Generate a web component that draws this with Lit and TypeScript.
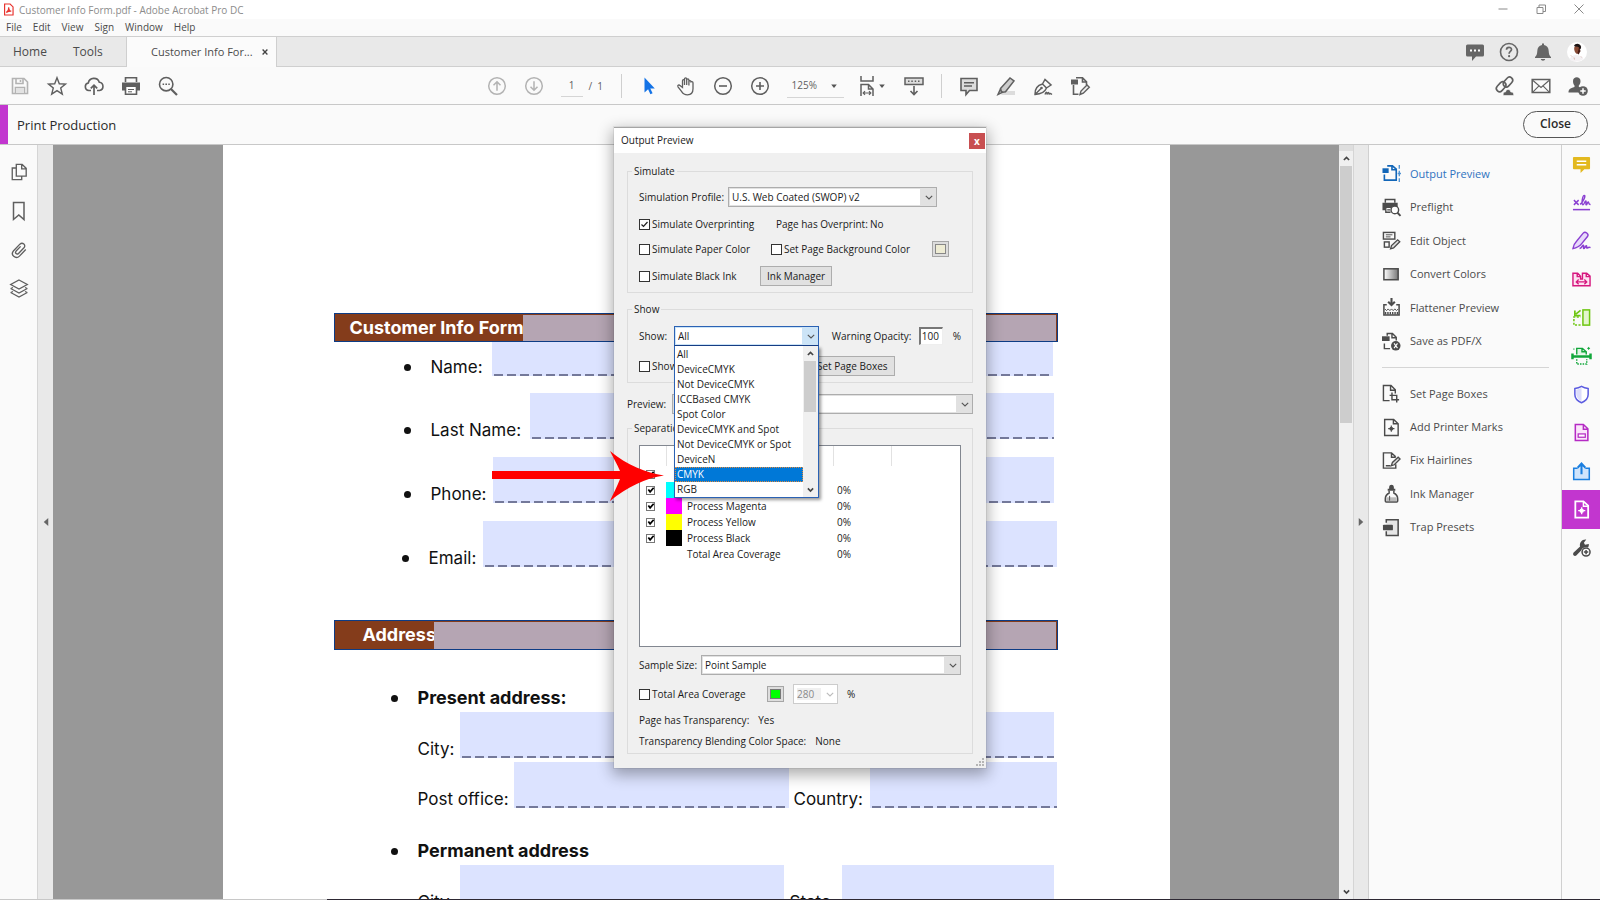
import { LitElement, html, css, svg, nothing } from "lit";
import { customElement, property } from "lit/decorators.js";

const ICONS: Record<string, unknown> = {
  pdf: svg`<path d="M4 1.500h8.500L17 6v12.500H4z" fill="#fff" stroke="#e8322d" stroke-width="1.800"/><path d="M6.500 14.500c2-1 4-4.500 3.800-8 .2 4 2 6 4 6-3-.2-5 .5-7.800 2z" fill="none" stroke="#e8322d" stroke-width="1.700"/>`,
  save: svg`<g fill="none" stroke="#b3b3b3" stroke-width="1.600"><path d="M2.500 2.500h11.500l3.500 3.500v11.500h-15z"/><path d="M6 2.500v5h7v-5M5.500 17.500v-6h9v6M10.500 4v2"/></g><path d="M6 12h8v5H6z" fill="#e2e2e2"/>`,
  star: svg`<path d="M10 1.800l2.300 5.900 6.200.3-4.800 4 1.600 6.200L10 14.700l-5.300 3.500L6.300 12 1.500 8l6.200-.3z" fill="none" stroke="currentColor" stroke-width="1.400"/>`,
  cloud: svg`<path d="M7 14.500H4.800a3.800 3.800 0 0 1-.5-7.500 5.700 5.700 0 0 1 11-.8 4.200 4.200 0 0 1 .2 8.300H13" fill="none" stroke="currentColor" stroke-width="1.600"/><path d="M10 19V9.500M6.800 12.300L10 9.200l3.200 3.100" fill="none" stroke="currentColor" stroke-width="1.700"/>`,
  print: svg`<path d="M4.500 6V1.800h11V6" fill="none" stroke="currentColor" stroke-width="1.600"/><path d="M1 6.500h18v8h-3v-3H4v3H1z" fill="currentColor"/><path d="M4.500 11v7.200h11V11" fill="#fff" stroke="currentColor" stroke-width="1.600"/><path d="M7 13.500h6M7 15.800h4" stroke="currentColor"/>`,
  find: svg`<circle cx="8.200" cy="8.200" r="6.700" fill="none" stroke="currentColor" stroke-width="1.600"/><path d="M13 13l6 6" stroke="currentColor" stroke-width="2.200"/><path d="M4.600 8.200h1.500M7.400 8.200h1.600M10.300 8.200h1.500" stroke="currentColor" stroke-width="1.600"/>`,
  up: svg`<circle cx="10" cy="10" r="8.300" fill="none" stroke="#b3b3b3" stroke-width="1.500"/><path d="M10 14.800V6M6.500 9.200L10 5.700l3.500 3.500" fill="none" stroke="#b3b3b3" stroke-width="1.500"/>`,
  down: svg`<circle cx="10" cy="10" r="8.300" fill="none" stroke="#b3b3b3" stroke-width="1.500"/><path d="M10 5.200V14M6.500 10.800l3.500 3.500 3.500-3.500" fill="none" stroke="#b3b3b3" stroke-width="1.500"/>`,
  pointer: svg`<path d="M5.500 1.500v15l3.600-3.200 2.300 5 2.200-1-2.300-4.900h4.500z" fill="#1473e6"/>`,
  hand: svg`<path d="M6.500 11.500V4.800c0-1.600 2-1.600 2 0V9 3c0-1.600 2.200-1.600 2.200 0v6-5c0-1.500 2.200-1.500 2.200 0v5.500V5.800c0-1.500 2.100-1.500 2.100 0 0 0 1.900-.8 2 1v6c0 3.600-2.200 6-5.500 6-3 0-4.600-1.200-6-3.500L2 10.800c-.8-1.500 1-2.400 2-1.200z" fill="none" stroke="currentColor" stroke-width="1.300"/>`,
  minus: svg`<circle cx="10" cy="10" r="8.300" fill="none" stroke="currentColor" stroke-width="1.500"/><path d="M6 10h8" stroke="currentColor" stroke-width="1.600"/>`,
  plus: svg`<circle cx="10" cy="10" r="8.300" fill="none" stroke="currentColor" stroke-width="1.500"/><path d="M6 10h8M10 6v8" stroke="currentColor" stroke-width="1.600"/>`,
  fit: svg`<g fill="none" stroke="currentColor" stroke-width="1.500"><path d="M3 0v5h12V0M3 20V8.500h7.500L15 13v7M10.500 8.500V13H15"/><path d="M5.500 17h7M7 15.200L5.200 17 7 18.800M11 15.200l1.800 1.800-1.800 1.800" stroke-width="1.200"/></g>`,
  scroll: svg`<rect x="1" y="2" width="18" height="6.500" fill="#ddd" stroke="currentColor" stroke-width="1.500"/><path d="M4 5.300h1.500M7.300 5.300h1.500M10.700 5.300h1.500M14 5.300h1.500" stroke="currentColor" stroke-width="1.500"/><path d="M10 10v8.500M6.500 15l3.500 3.500 3.500-3.500" fill="none" stroke="currentColor" stroke-width="1.600"/>`,
  comment: svg`<path d="M2 2.500h16v12h-7.500L7 18.500v-4H2z" fill="#ddd" stroke="currentColor" stroke-width="1.600"/><path d="M5 6.700h10M5 10h8" stroke="currentColor" stroke-width="1.400"/>`,
  marker: svg`<path d="M8 15h11v4H5z" fill="#dcdcdc"/><path d="M4.500 12.500L14 2l4 3-8.500 10.800-3.800.7zM4 14l2.500 2.300L2 18.500z" fill="#ccc" stroke="currentColor" stroke-width="1.500"/>`,
  sign: svg`<path d="M2 18.500c-.3-5 2-9 7.500-10.500l4 4c-1.500 4-5.500 6-11.500 6.500zm0 0l6-6M9.500 8l2.500-4.500 6 5.500-4.500 3" fill="none" stroke="currentColor" stroke-width="1.500"/><circle cx="8.500" cy="12" r="1.300" fill="currentColor"/><path d="M12 18.500c1-3 2-3 2 0 1-3 2-2.500 2 0 .6-1.500 1.500-1 3 0" fill="none" stroke="currentColor" stroke-width="1.400"/>`,
  pageedit: svg`<path d="M6 1.800h6.500l4 4V9M12.500 2v4h4M3.500 9v9.200h5" fill="none" stroke="currentColor" stroke-width="1.600"/><path d="M1 3.500h7v5H1z" fill="currentColor"/><path d="M10 18.500l1-3.500 6-6 2.300 2.200-6 6z" fill="#eee" stroke="currentColor" stroke-width="1.400"/>`,
  chat: svg`<path d="M2.500 2.500h15q1.500 0 1.500 1.500v9q0 1.500-1.500 1.500H11L7 19v-4.500H2.500Q1 14.500 1 13V4q0-1.500 1.500-1.500z" fill="currentColor"/><path d="M5 8.500h2M9 8.500h2M13 8.500h2" stroke="#fff" stroke-width="2"/>`,
  help: svg`<circle cx="10" cy="10" r="8.500" fill="none" stroke="currentColor" stroke-width="1.600"/><path d="M7.500 7.800c0-3.400 5-3.200 5-.3 0 1.900-2.400 2-2.400 4.200" fill="none" stroke="currentColor" stroke-width="1.700"/><circle cx="10.100" cy="14.200" r="1.100" fill="currentColor"/>`,
  bell: svg`<path d="M9 1.500h2v1.600c3 .5 4.600 2.600 4.700 6 .1 3.300.8 4.500 2.300 6v.9H2v-.9c1.500-1.500 2.200-2.700 2.300-6C4.400 5.700 6 3.600 9 3.100zM7.800 17h4.400c-.3 2.300-4.100 2.300-4.400 0z" fill="currentColor"/>`,
  avatar: svg`<circle cx="10" cy="10" r="10" fill="#fff"/><path d="M7 4c1-3 6-3 7 .5.500 2-1 3-1 3z" fill="#1d1414"/><path d="M7.200 5.500c1.200-1.500 3.500-1 4.800 0 .5 3-.3 5.300-2 6.500-2-.8-3-3.500-2.800-6.500z" fill="#8a4b35"/><path d="M12 5.500l1.600 3.500-2 3.500-1.200-1z" fill="#4a1d16"/><path d="M2.500 17.500c2-4 5-4.500 7-4.500s5 1 7 4c-3.500 3-10 3.500-14 .5z" fill="#f4f1f3"/><path d="M4 13.500l1 1M7 15.500l.5 2M14 14.500l.8 1" stroke="#d9b6ae"/>`,
  link: svg`<g fill="none" stroke="currentColor" stroke-width="1.600"><rect x="8" y="1.800" width="11" height="6.400" rx="3.200" transform="rotate(-48 13.500 5) translate(-.5 1)"/><rect x="1" y="9" width="11" height="6.400" rx="3.200" transform="rotate(-48 6.500 12.200) translate(1.500 -.5)"/></g><path d="M9.500 19.500c-1.200-2.200.3-3.800 2-3.500.5-3.300 4.800-3.300 5.300 0 2.300-.2 3.400 1.700 2.700 3.500z" fill="currentColor" stroke="#fafafa" stroke-width=".6"/>`,
  mail: svg`<g fill="none" stroke="currentColor"><rect x="1.200" y="3.500" width="17.600" height="13" stroke-width="1.500"/><path d="M2 4.500l8 7 8-7M2 15.800l6-6M18 15.800l-6-6" stroke-width="1.100"/></g>`,
  useradd: svg`<path d="M5 5c0-5 7.500-5 7.500 0 0 2.300-.8 3.500-1.700 4.500v1.300c1 .6 2.300.8 3 1.400-2 1-2.800 2.500-2.500 4.300H.5c0-3.500 1.500-4.300 6-5.600V9.500C5.700 8.500 5 7.300 5 5z" fill="currentColor"/><circle cx="15" cy="15" r="4.800" fill="currentColor"/><path d="M12.300 15h5.400M15 12.300v5.400" stroke="#fff" stroke-width="1.500"/>`,
  pages: svg`<g fill="none" stroke="currentColor" stroke-width="1.500"><path d="M7 1.500h6.500L18 6v8.500H7zM13 1.800V6.500h5M7 5.500H2.500v13H13v-4"/></g>`,
  bookmark: svg`<path d="M4.500 1.500h10.500v17l-5.200-4.500-5.300 4.500z" fill="none" stroke="currentColor" stroke-width="1.500"/>`,
  clip: svg`<path d="M17.500 9.500l-7 7.300c-4.200 4-10.500-1.500-6.500-6L11 3.500c3-2.700 7.200 1 4.500 4l-6 6.300c-2 1.800-4.500-.6-2.700-2.600l5-5.200" fill="none" stroke="currentColor" stroke-width="1.500"/>`,
  layers: svg`<g fill="none" stroke="currentColor" stroke-width="1.300"><path d="M10 1l8.300 4.500L10 10 1.700 5.500zM1.700 9.500L10 14l8.300-4.500M1.700 13.500L10 18l8.300-4.500"/><path d="M4 8.500l-2.300 1M16 8.500l2.300 1M4 12.500l-2.300 1M16 12.500l2.300 1"/></g>`,
  output: svg`<path d="M5.500 2h5.500l4 3.500V17H2.500v-6M10.500 2v4H15" fill="none" stroke="#1266b8" stroke-width="1.700"/><path d="M.5 4.500h6.500v5H.5z" fill="#1266b8"/><path d="M18.200 1v4M18.200 7v6M18.200 15v4M16.500 10H20" stroke="#4f92d2" stroke-width="1.400"/>`,
  preflight: svg`<path d="M3.500 5V1.500h10V5" fill="none" stroke="currentColor" stroke-width="1.500"/><path d="M.5 5h16v5.500H4V13H.500z" fill="currentColor"/><path d="M4 10.500v4.500h5M5.500 12.500h3" fill="none" stroke="currentColor" stroke-width="1.400"/><circle cx="13.500" cy="12.500" r="4" fill="#fff" stroke="currentColor" stroke-width="1.500"/><path d="M16.300 15.500l3.200 3.300" stroke="currentColor" stroke-width="2"/>`,
  editobj: svg`<g fill="none" stroke="currentColor" stroke-width="1.500"><rect x="1.500" y="1.500" width="12" height="7"/><path d="M4 4h7M4 6.200h5" stroke-width="1"/><rect x="2.500" y="11.500" width="5" height="5.500"/></g><path d="M9 18.800l1-3.500 6.500-6 2.200 2-6.500 6.500z" fill="#ddd" stroke="currentColor" stroke-width="1.400"/>`,
  convert: svg`<defs><linearGradient id="cv"><stop offset="0" stop-color="#fff"/><stop offset="1" stop-color="#777"/></linearGradient></defs><rect x="2" y="4" width="15" height="11.500" fill="url(#cv)" stroke="currentColor" stroke-width="1.600"/>`,
  flatten: svg`<path d="M10 0v7M6.500 4L10 7.500 13.500 4" fill="none" stroke="currentColor" stroke-width="2.200"/><path d="M5 7H2v11h16V7h-3" fill="none" stroke="currentColor" stroke-width="1.600"/><path d="M3 11.500l1.800 1.800 1.700-1.800 1.800 1.800 1.700-1.800 1.800 1.800 1.700-1.800 1.800 1.800 1.700-1.800" fill="none" stroke="currentColor"/><path d="M3 16h14" stroke="currentColor" stroke-width="2.500" stroke-dasharray="1.500 1"/>`,
  pdfx: svg`<path d="M5.500 4V1.500H11L15 5.500V9M10.500 1.500V6H15M2.500 12v5.500h6" fill="none" stroke="currentColor" stroke-width="1.500"/><path d="M0 4.500h8v5H0z" fill="currentColor"/><circle cx="14.500" cy="14.500" r="5" fill="currentColor"/><path d="M12.700 12l3.600 5M16.300 12l-3.600 5" stroke="#fff" stroke-width="1.200"/>`,
  boxes: svg`<path d="M8 17.500H1.500v-16h8L14 6v4M9 1.500V6.500h5" fill="none" stroke="currentColor" stroke-width="1.500"/><path d="M10.500 9v7.500H18M8 12h7.500v7.500" fill="none" stroke="currentColor" stroke-width="1.500"/>`,
  marks: svg`<path d="M2.800 1.500h9.500L17 6v12.500H2.800zM12 1.500V6h5" fill="none" stroke="currentColor" stroke-width="1.500"/><path d="M9.800 8v6.500M6.500 11.200h6.600" stroke="currentColor" stroke-width="1.200"/><circle cx="9.800" cy="11.200" r="2" fill="currentColor"/>`,
  hairline: svg`<path d="M14.500 14v4H1.500v-16h8.500L14.500 6M10 2v4.500h4.500M4 15.500h5" fill="none" stroke="currentColor" stroke-width="1.500"/><path d="M9.800 15.500l1.200-3.500 6-5.500 2 2-6 6z" fill="#ddd" stroke="currentColor" stroke-width="1.400"/>`,
  ink: svg`<path d="M7.500 3.500C7.500 0 12.500 0 12.500 3.500V5h1.500v2.200H6V5h1.500z" fill="currentColor"/><path d="M7.500 7v2.500c-2.500 1.500-4 3-4 6V18q0 1 1 1h11q1 0 1-1v-2.500c0-3-1.500-4.500-4-6V7" fill="none" stroke="currentColor" stroke-width="1.600"/><path d="M4.500 14h11v4h-11z" fill="#bbb"/><path d="M8 12.500v5" stroke="currentColor"/>`,
  trap: svg`<path d="M4.500 5V1.800H17v16.500H4.500V14" fill="#e6e6e6" stroke="currentColor" stroke-width="1.600"/><rect x="1" y="7" width="10.500" height="6" rx="1" fill="currentColor"/>`,
  rcomment: svg`<path d="M2 2h16q1 0 1 1v11q0 1-1 1h-5l-4 4v-4H2q-1 0-1-1V3q0-1 1-1z" fill="#e3b91f"/><path d="M5 6.500h10M5 10.300h10" stroke="#fff" stroke-width="1.600"/>`,
  rsign: svg`<path d="M2 7.500l5 5M7 7.500l-5 5M8.500 12c4-3 6-9.500 4.500-9.500-2 0-3.500 10-1.500 10 1 0 2-4 3-4s-.5 4 .5 4 1-3 2-3 0 3 2.500 2.500" fill="none" stroke="#8a3fd1" stroke-width="1.500"/><path d="M1 17.500h18" stroke="#8a3fd1" stroke-width="1.600"/>`,
  rfill: svg`<path d="M1 18.500c.5-4 2-6 4-8L12 2c2-2 6 1 4.500 3.500L10 13.500c-2 2.500-4.500 4-9 5z" fill="#e7d9fb" stroke="#8a3fd1" stroke-width="1.500"/><path d="M8 18.500c2.500-.5 3-4 4-3.500s-.5 3.500.5 3.500 1.500-3 2.500-3-.3 2.500.7 2.500 1.500-1.500 3.800-.5" fill="none" stroke="#8a3fd1" stroke-width="1.600"/>`,
  rcombine: svg`<path d="M1 3.500h5L9 6.500v3h2v-6h4.500L19 6.500v10H1zM5.500 3.500v3.500H9M15 3.500v3.500h4" fill="#fde3f1" stroke="#d6187f" stroke-width="1.500"/><path d="M4.500 12.500h11M7 10l-2.500 2.500L7 15M13 10l2.500 2.500L13 15" fill="none" stroke="#d6187f" stroke-width="1.400"/>`,
  rorganize: svg`<rect x="11.500" y="2" width="7" height="16" fill="#e3f6cd" stroke="#6fc613" stroke-width="1.600"/><path d="M9 18H2V9.500h7" fill="none" stroke="#6fc613" stroke-width="1.600" stroke-dasharray="2.200 1.500"/><path d="M9 2.500L4 6.500M3 2.500V8h6" fill="none" stroke="#6fc613" stroke-width="1.800"/>`,
  rscan: svg`<path d="M5 9V2.500h6L15 6v3M10.500 2.500V6H15" fill="#dff5e4" stroke="#12a73b" stroke-width="1.500"/><path d="M.5 8v6M19.500 8v6M1 11h18" stroke="#12a73b" stroke-width="2.600"/><path d="M5 14v5h10.500v-5" fill="none" stroke="#12a73b" stroke-width="1.500" stroke-dasharray="1.600 1.200"/><path d="M17.500 1v3M16 2.500h3M2 2.500v1.500" stroke="#12a73b"/>`,
  rprotect: svg`<path d="M10 1.500c2.500 1.500 4.500 2 7 2.300V10c0 4-3 7-7 8.700C6 17 3 14 3 10V3.800c2.500-.3 4.500-.8 7-2.300z" fill="#fff" stroke="#5c5ce0" stroke-width="1.600"/><path d="M10 3v14c-3-1.500-5.600-4-5.600-7.500V5c2-.3 4-.8 5.600-2z" fill="#dcdcfa"/>`,
  rredact: svg`<path d="M3.500 1.500H12L16.700 6v12.500H3.500zM12 1.500V6.500h4.700" fill="#fbe5fb" stroke="#b52bc4" stroke-width="1.600"/><rect x="6.500" y="11.500" width="7.500" height="3.500" fill="#fff" stroke="#b52bc4" stroke-width="1.300"/>`,
  rshare: svg`<path d="M6 6.500H1.800v12h16.400v-12H14" fill="#cfe4fc" stroke="#1b7fe0" stroke-width="1.600"/><path d="M10 13V2.500M6 6l4-4.300L14 6" fill="none" stroke="#1b7fe0" stroke-width="2.200"/>`,
  rprint: svg`<path d="M3.500 1.500H12L17 6v12.500H3.500z" fill="none" stroke="#fff" stroke-width="1.900"/><path d="M12 1.500V6.500h5" fill="none" stroke="#fff" stroke-width="1.500"/><path d="M10.200 7.500v7.500M6.500 11.200h7.500" stroke="#fff" stroke-width="1.400"/><circle cx="10.200" cy="11.200" r="2.300" fill="#fff"/>`,
  rtools: svg`<path d="M1.500 15.500l7-6.500C7.500 5 10.500 1 15 1.500L12.500 5l1.200 2.200 4-1c.5 4-3 6.500-6.500 5.300L4.500 18.500c-2 1.200-4.300-1-3-3z" fill="currentColor"/><circle cx="14.800" cy="14.800" r="5.400" fill="#fafafa"/><circle cx="14.800" cy="14.800" r="4.200" fill="#fafafa" stroke="currentColor" stroke-width="1.600"/><path d="M12.500 14.800h4.600M14.800 12.500v4.600" stroke="currentColor" stroke-width="1.600"/>`,
  minimize: svg`<path d="M5.500 9h9" stroke="#8a8a8a"/>`,
  restore: svg`<path d="M6 7.500h6v6H6zM8 7.500V5h6.500v6.500H12" fill="none" stroke="#8a8a8a"/>`,
  closewin: svg`<path d="M5.500 4.500l9 9M14.500 4.500l-9 9" stroke="#8a8a8a"/>`,
  closetab: svg`<path d="M7 7l6 6M13 7l-6 6" stroke="#444" stroke-width="1.700"/>`,
  chevron: svg`<path d="M6 8.500L10 12.500l4-4" fill="none" stroke="currentColor" stroke-width="1.400"/>`,
  chevup: svg`<path d="M6.500 12L10 8.500l3.500 3.500" fill="none" stroke="#444" stroke-width="2.200"/>`,
  chevdown: svg`<path d="M6.500 8.500L10 12l3.500-3.500" fill="none" stroke="#444" stroke-width="2.200"/>`,
  caret: svg`<path d="M6.500 8h7L10 12.500z" fill="#555"/>`,
  tleft: svg`<path d="M12.500 5.500v9L7.500 10z" fill="#666"/>`,
  tright: svg`<path d="M7.500 5.500v9L12.500 10z" fill="#666"/>`,
};

@customElement("ui-icon")
export class UiIcon extends LitElement {
  @property() name = "";
  @property({ type: Number }) size = 20;
  static styles = css`
    :host { display: inline-flex; flex: none; }
    svg { display: block; overflow: visible; }
  `;
  render() {
    return html`<svg width=${this.size} height=${this.size} viewBox="0 0 20 20" aria-hidden="true">${ICONS[this.name]}</svg>`;
  }
}

const icon = (name: string, size = 20) => html`<ui-icon name=${name} size=${size}></ui-icon>`;
const iconButton = (name: string, label: string, size = 20) =>
  html`<button class="ib" aria-label=${label}>${icon(name, size)}</button>`;

/* ---------- Output Preview window ---------- */

const SHOW_OPTIONS = ["All", "DeviceCMYK", "Not DeviceCMYK", "ICCBased CMYK", "Spot Color",
  "DeviceCMYK and Spot", "Not DeviceCMYK or Spot", "DeviceN", "CMYK", "RGB"];

const INKS = [
  { id: "Process plates", name: "", ink: "", value: "", check: true },
  { id: "Process Cyan", name: "", ink: "#00ffff", value: "0%", check: true },
  { id: "Process Magenta", name: "Process Magenta", ink: "#ff00ff", value: "0%", check: true },
  { id: "Process Yellow", name: "Process Yellow", ink: "#ffff00", value: "0%", check: true },
  { id: "Process Black", name: "Process Black", ink: "#000000", value: "0%", check: true },
  { id: "Total", name: "Total Area Coverage", ink: "", value: "0%", check: false },
];

@customElement("output-preview")
export class OutputPreview extends LitElement {
  static styles = css`
    :host { display: block; font: 10px/14px "Open Sans", "Noto Sans", sans-serif; color: #1a1a1a; background: #f0f0f0;
      box-shadow: 0 0 0 1px rgba(0,0,0,.06), 0 5px 14px 2px rgba(0,0,0,.32); border-top: 1px solid #a5a5a5; }
    * { box-sizing: border-box; }
    .title { display: flex; justify-content: space-between; background: #fff; height: 25px; padding: 5px 1px 0 7px; }
    .x { width: 16px; height: 16px; border: 0; padding: 0; background: #c84f51; color: #fff; font: 700 10px/14px "Open Sans", sans-serif; }
    .body { padding: 11px 13px 14px; display: flex; flex-direction: column; }
    fieldset { margin: 0; min-width: 0; border: 1px solid #dcdcdc; padding: 9px 11px 6px; }
    legend { margin-left: -7px; padding: 0 2px; }
    .rows { display: flex; flex-direction: column; gap: 9px; }
    .row { display: flex; align-items: center; min-height: 16px; white-space: nowrap; }
    .tall { height: 20px; }
    label.check { display: inline-flex; align-items: center; gap: 2px; }
    .c1 { width: 89px; } .c2 { width: 137px; } .c3 { width: 132px; } .c4 { width: 121px; }
    .c5 { width: 35px; } .c6 { width: 171px; } .c7 { width: 128px; } .c8 { width: 62px; } .c9 { width: 161px; }
    .c10 { width: 45px; } .c11 { width: 94px; } .c12 { width: 87px; }
    input[type="checkbox"] { appearance: none; flex: none; margin: 0; width: 11px; height: 11px; border: 1px solid #333; background: #fff no-repeat center/9px 9px; }
    input[type="checkbox"]:checked { background-image: url("data:image/svg+xml,%3Csvg xmlns='http://www.w3.org/2000/svg' viewBox='0 0 9 9'%3E%3Cpath d='M1.500 4.500l2 2 4-4.500' fill='none' stroke='%23222' stroke-width='1.200'/%3E%3C/svg%3E"); }
    td input[type="checkbox"] { width: 9px; height: 9px; border-color: #777; display: block; background-size: 8px 8px; }
    td input[type="checkbox"]:checked { background-image: url("data:image/svg+xml,%3Csvg xmlns='http://www.w3.org/2000/svg' viewBox='0 0 9 9'%3E%3Cpath d='M1.500 4l2 2.500 4-4.500' fill='none' stroke='%23000' stroke-width='2'/%3E%3C/svg%3E"); }
    .combo { position: relative; display: block; height: 20px; }
    .combo > ui-icon { position: absolute; right: 0; top: 2px; pointer-events: none; color: #555; }
    select { appearance: none; display: block; width: 100%; height: 20px; margin: 0; border: 1px solid #adadad; border-radius: 0; padding: 0 18px 1px 3px; color: #1a1a1a;
      font: 10px/14px "Open Sans", "Noto Sans", sans-serif; opacity: 1; outline: 0;
      background: linear-gradient(#fff, #fff) 1px 1px / calc(100% - 17px) calc(100% - 2px) no-repeat #e1e1e1; }
    .open select { border-color: #2b62b4; border-bottom-color: #173f87; background-color: #cce4f7; }
    select:disabled { color: #8a8a8a; border-color: #ccc; background: linear-gradient(#f0f0f0, #f0f0f0) 3px 3px / 24px 12px no-repeat #fff; }
    .combo select:disabled + ui-icon { color: #bbb; }
    .profile { width: 209px; }
    .show { width: 145px; margin-right: 13px; }
    .grow { flex: 1; }
    .limit { width: 45px; margin: 0 9px; }
    .showset { margin-top: 9px; padding-top: 10px; }
    .showset .rows { gap: 10px; }
    .sep { padding-top: 10px; padding-bottom: 1px; }
    button.push { height: 20px; border: 1px solid #adadad; background: #e1e1e1; color: #1a1a1a; padding: 0 6px 1px; font: 10px/14px "Open Sans", sans-serif; }
    .swatch { width: 17px; height: 16px; padding: 2px; border: 1px solid #a6a6a6; background: #ddd; display: flex; }
    .swatch i { flex: 1; border: 1px solid #888; background: #eeecd4; }
    .swatch.green i { background: #00ff00; border-color: #777; }
    .opacity { width: 24px; height: 18px; border: 1px solid #eee; border-top: 2px solid #777; border-left: 2px solid #777; padding: 0 0 1px 1px; margin: 0 10px 0 0; font: 10px/12px "Open Sans", sans-serif; color: #1a1a1a; }
    .list { position: absolute; z-index: 2; top: 20px; left: 0; width: 145px; display: flex; background: #fff; border: 1px solid #2b62b4; border-top: 0; box-shadow: 2px 2px 3px rgba(0,0,0,.4); }
    ul { list-style: none; margin: 0; padding: 1px 0 0; width: 129px; }
    li { height: 15px; line-height: 15px; padding: 0 2px; }
    li.on { background: #0078d7; color: #fff; outline: 1px dotted #e08a3c; outline-offset: -1px; }
    .sb { flex: 1; background: #f0f0f0; display: flex; flex-direction: column; align-items: center; }
    .sb i { width: 12px; height: 51px; background: #cdcdcd; }
    .sb span { flex: 1; }
    .preview { margin: 11px 0 7px; }
    .box { height: 202px; border: 1px solid #828790; background: #fff; }
    table { width: 100%; border-collapse: collapse; table-layout: fixed; }
    th { height: 20px; padding: 0; border-right: 1px solid #e2e2e2; }
    th:last-child { border: 0; }
    td { height: 16px; padding: 0; line-height: 14px; }
    td:first-child { padding-left: 6px; }
    .k1 { width: 26px; } .k2 { width: 167px; } .k3 { width: 58px; }
    .ink { display: flex; gap: 5px; align-items: center; height: 16px; }
    .ink i { width: 16px; height: 16px; }
    .val { padding-left: 4px; }
    .sample { margin: 8px 0 9px; }
    .info { line-height: 21px; margin: 6px 0 0; }
    .info div { display: flex; gap: 9px; }
    .info dt, .info dd { margin: 0; }
    .grip { position: absolute; right: 2px; bottom: 2px; }
  `;
  render() {
    return html`
      <div class="title"><span>Output Preview</span><button class="x" aria-label="Close window">x</button></div>
      <div class="body">
        <fieldset>
          <legend>Simulate</legend>
          <div class="rows">
            <div class="row tall"><label class="c1" for="profile">Simulation Profile:</label>
              <span class="combo profile"><select id="profile"><option>U.S. Web Coated (SWOP) v2</option></select>${icon("chevron", 16)}</span></div>
            <div class="row"><label class="check c2"><input type="checkbox" checked>Simulate Overprinting</label><span class="c11">Page has Overprint:</span><span>No</span></div>
            <div class="row"><label class="check c3"><input type="checkbox">Simulate Paper Color</label><label class="check c9"><input type="checkbox">Set Page Background Color</label>
              <button class="swatch" aria-label="Page background color"><i></i></button></div>
            <div class="row tall"><label class="check c4"><input type="checkbox">Simulate Black Ink</label><button class="push">Ink Manager</button></div>
          </div>
        </fieldset>
        <fieldset class="showset">
          <legend>Show</legend>
          <div class="rows">
            <div class="row tall"><label class="c5" for="show">Show:</label>
              <span class="combo show open"><select id="show"><option>All</option></select>${icon("chevron", 16)}
                <div class="list">
                  <ul role="listbox" aria-label="Show">${SHOW_OPTIONS.map((o) => html`<li role="option" aria-selected=${o === "CMYK"} class=${o === "CMYK" ? "on" : ""}>${o}</li>`)}</ul>
                  <div class="sb">${icon("chevup", 15)}<i></i><span></span>${icon("chevdown", 15)}</div>
                </div>
              </span>
              <label class="c12" for="opacity">Warning Opacity:</label><input id="opacity" class="opacity" value="100"><span>%</span></div>
            <div class="row tall"><label class="check c6"><input type="checkbox">Show</label><button class="push">Set Page Boxes</button></div>
          </div>
        </fieldset>
        <div class="row tall preview"><label class="c10" for="preview">Preview:</label>
          <span class="combo grow"><select id="preview"><option></option></select>${icon("chevron", 16)}</span></div>
        <fieldset class="sep">
          <legend>Separations</legend>
          <div class="box">
            <table aria-label="Separations">
              <thead><tr><th class="k1" aria-label="Visible"></th><th class="k2" aria-label="Plate"></th><th class="k3" aria-label="Coverage"></th><th aria-label="Notes"></th></tr></thead>
              <tbody>${INKS.map((k) => html`<tr>
                <td>${k.check ? html`<input type="checkbox" checked aria-label=${k.id}>` : nothing}</td>
                <td><span class="ink"><i style="background:${k.ink || "transparent"}"></i>${k.name}</span></td>
                <td class="val">${k.value}</td><td></td></tr>`)}</tbody>
            </table>
          </div>
          <div class="row tall sample"><label class="c8" for="sample">Sample Size:</label>
            <span class="combo grow"><select id="sample"><option>Point Sample</option></select>${icon("chevron", 16)}</span></div>
          <div class="row tall"><label class="check c7"><input type="checkbox">Total Area Coverage</label>
            <button class="swatch green" aria-label="Coverage warning color"><i></i></button>
            <span class="combo limit"><select disabled aria-label="Coverage limit"><option>280</option></select>${icon("chevron", 16)}</span><span>%</span></div>
          <dl class="info"><div><dt>Page has Transparency:</dt><dd>Yes</dd></div><div><dt>Transparency Blending Color Space:</dt><dd>None</dd></div></dl>
        </fieldset>
      </div>
      <svg class="grip" width="8" height="8" viewBox="0 0 8 8" fill="#b5b5b5" aria-hidden="true"><path d="M6 0h2v2H6zM3 3h2v2H3zM6 3h2v2H6zM0 6h2v2H0zM3 6h2v2H3zM6 6h2v2H6z"/></svg>
    `;
  }
}

/* ---------- PDF form page ---------- */

@customElement("form-page")
export class FormPage extends LitElement {
  static styles = css`
    :host { display: flex; flex-direction: column; background: #fff; padding: 168px 112px 0 111px; color: #111;
      font: 17px/18px "Inter", "Open Sans", sans-serif; box-sizing: border-box; }
    * { box-sizing: border-box; }
    .bar { display: flex; height: 29px; background: #843c1b; border: 1px solid #0d3c85; flex: none; }
    .bar h2 { margin: 0; color: #fff; font: 700 18px/27px "Inter", sans-serif; padding-left: 15px; width: 188px; white-space: nowrap; }
    .bar.addr { height: 30px; margin-top: 53px; }
    .bar.addr h2 { padding-left: 28px; width: 99px; }
    .bar input { flex: 1; min-width: 0; border: 0; margin: 1px 1px 0 0; padding: 0; background: #b5a5b3; border-radius: 0; }
    .row { display: flex; align-items: flex-end; height: 46px; margin-top: 18px; padding-right: 4px; flex: none; white-space: nowrap; }
    .row.first { height: 34px; margin-top: 0; padding-right: 5px; }
    .row.second { margin-top: 17px; }
    .row.wide { padding-right: 1px; }
    .row.tight { margin-top: 4px; }
    .dot { width: 7px; height: 7px; border-radius: 50%; background: #111; margin-bottom: 5px; flex: none; }
    .bul { display: flex; align-items: flex-end; gap: 20px; flex: none; }
    .n { padding-left: 70px; width: 158px; } .l { padding-left: 70px; width: 196px; }
    .p { padding-left: 70px; width: 159px; } .e { padding-left: 68px; width: 149px; }
    .city { padding-left: 84px; width: 126px; flex: none; } .post { padding-left: 84px; width: 180px; flex: none; }
    .country { padding-left: 5px; width: 81px; flex: none; } .state { padding-left: 6px; width: 58px; flex: none; }
    .f { flex: 1; min-width: 0; height: 100%; border: 0; padding: 0; margin: 0; border-radius: 0;
      background: repeating-linear-gradient(90deg, transparent 0 2px, #74799a 2px 11px, transparent 11px 13px) left bottom / 100% 2px no-repeat #dce3ff; }
    .half.short { flex: 0 0 275px; } .half.mid { flex: 0 0 324px; }
    .sub { display: flex; align-items: center; gap: 20px; margin: 39px 0 1px 57px; height: 18px; flex: none; }
    .sub h3 { margin: 0; font: 700 18px/18px "Inter", sans-serif; }
    .sub .dot { margin: 0; }
    .sub.next { margin-top: 34px; }
  `;
  private field(id: string, label: string, cls: string, rowCls = "") {
    return html`<div class="row ${rowCls}"><label class="bul ${cls}" for=${id}><span class="dot"></span>${label}</label><input id=${id} class="f"></div>`;
  }
  render() {
    return html`
      <div class="bar"><h2>Customer Info Form</h2><input aria-label="Customer Info Form"></div>
      ${this.field("name", "Name:", "n", "first")}
      ${this.field("last", "Last Name:", "l", "second")}
      ${this.field("phone", "Phone:", "p")}
      ${this.field("email", "Email:", "e", "wide")}
      <div class="bar addr"><h2>Address</h2><input aria-label="Address"></div>
      <div class="sub"><span class="dot"></span><h3>Present address:</h3></div>
      <div class="row tight"><label class="city" for="city">City:</label><input id="city" class="f"></div>
      <div class="row tight wide"><label class="post" for="post">Post office:</label><input id="post" class="f half short"><label class="country" for="country">Country:</label><input id="country" class="f"></div>
      <div class="sub next"><span class="dot"></span><h3>Permanent address</h3></div>
      <div class="row tight"><label class="city" for="city2">City:</label><input id="city2" class="f half mid"><label class="state" for="state">State:</label><input id="state" class="f"></div>
    `;
  }
}

/* ---------- Application shell ---------- */

const GROUP_A = [["output", "Output Preview"], ["preflight", "Preflight"], ["editobj", "Edit Object"],
  ["convert", "Convert Colors"], ["flatten", "Flattener Preview"], ["pdfx", "Save as PDF/X"]];
const GROUP_B = [["boxes", "Set Page Boxes"], ["marks", "Add Printer Marks"], ["hairline", "Fix Hairlines"],
  ["ink", "Ink Manager"], ["trap", "Trap Presets"]];
const RAIL = [["rcomment", "Comment"], ["rsign", "Fill and sign"], ["rfill", "Edit PDF"], ["rcombine", "Combine files"],
  ["rorganize", "Organize pages"], ["rscan", "Scan"], ["rprotect", "Protect"], ["rredact", "Redact"],
  ["rshare", "Share"], ["rprint", "Print Production"], ["rtools", "More tools"]];

@customElement("app-root")
export class AppRoot extends LitElement {
  static styles = css`
    :host { display: flex; flex-direction: column; position: relative; height: 100vh; overflow: hidden; background: #fafafa;
      font: 11px/16px "Open Sans", "Noto Sans", sans-serif; color: #4b4b4b; }
    * { box-sizing: border-box; }
    button { font: inherit; color: inherit; background: none; border: 0; padding: 0; margin: 0; }
    .ib { display: inline-flex; align-items: center; justify-content: center; flex: none; }
    a { color: inherit; text-decoration: none; }
    .titlebar { display: flex; align-items: center; height: 19px; background: #fff; padding: 0 11px 0 2px; font-size: 10px; color: #8c8c8c; gap: 4px; flex: none; }
    .wc { margin-left: auto; display: flex; gap: 18px; }
    .menu { display: flex; gap: 11px; height: 17px; line-height: 17px; padding-left: 6px; font-size: 10px; flex: none; }
    .tabs { display: flex; height: 31px; background: #e9e9e9; border-top: 1px solid #cfcfcf; flex: none; font-size: 12px; }
    .tabs > button { border-bottom: 1px solid #cfcfcf; }
    .home { width: 61px; text-align: left; padding-left: 13px; }
    .tabs > .tools { width: 66px; text-align: left; padding-left: 12px; border-right: 1px solid #cfcfcf; }
    .tab { width: 150px; background: #fbfbfb; display: flex; align-items: center; padding: 0 3px 1px 24px; justify-content: space-between; font-size: 11px; border-right: 1px solid #cfcfcf; }
    .acct { flex: 1; display: flex; justify-content: flex-end; align-items: center; gap: 14px; padding-right: 13px; border-bottom: 1px solid #cfcfcf; color: #666; }
    .toolbar { display: grid; grid-template-columns: 1fr auto 1fr; align-items: center; height: 38px; border-bottom: 1px solid #c8c8c8; flex: none; color: #5f5f5f; font-size: 10px; }
    .tl { display: flex; gap: 17px; padding-left: 10px; }
    .tm { display: flex; align-items: center; padding-right: 24px; gap: 17px; }
    .tr { display: flex; gap: 17px; justify-content: flex-end; padding-right: 12px; }
    .pageno { display: flex; align-items: center; gap: 6px; }
    .pageno input { width: 22px; height: 23px; border: 0; border-bottom: 1px solid #d5d5d5; background: none; text-align: center; font: inherit; color: inherit; padding: 0; }
    .total { display: flex; gap: 5px; width: 15px; }
    .rule { width: 1px; height: 24px; background: #cfcfcf; }
    .zoom { position: relative; width: 57px; }
    .zoom select { appearance: none; width: 100%; height: 24px; border: 0; border-bottom: 1px solid #d5d5d5; background: none; font: inherit; color: inherit; padding: 0 0 0 5px; border-radius: 0; }
    .zoom ui-icon { position: absolute; right: 2px; top: 4px; pointer-events: none; }
    .fit { display: flex; align-items: center; margin: 0 -3px; gap: 0; }
    .fit ui-icon:last-child { margin-left: -4px; }
    .band { display: flex; align-items: center; height: 40px; border-bottom: 1px solid #c8c8c8; padding-right: 12px; flex: none; }
    .band::before { content: ""; width: 8px; align-self: stretch; background: #c236cf; margin-right: 9px; }
    .band h1 { margin: 0; font: 500 13px/18px "Open Sans", sans-serif; color: #2a2a2a; }
    .close { margin-left: auto; width: 65px; height: 27px; border: 1px solid #555; border-radius: 14px; font-weight: 600; font-size: 12px; color: #2a2a2a; padding-bottom: 1px; }
    .main { flex: 1; min-height: 0; display: flex; }
    .nav { width: 37px; display: flex; flex-direction: column; align-items: center; gap: 20px; padding-top: 18px; color: #5f5f5f; flex: none; }
    .gutter { width: 16px; background: #e9e9e9; border-left: 1px solid #d5d5d5; display: flex; align-items: center; justify-content: center; flex: none; }
    .gutter.r { border-right: 1px solid #d0d0d0; }
    .canvas { flex: 1; min-width: 0; background: #989898; overflow: hidden; display: flex; justify-content: center; }
    form-page { width: 947px; flex: none; }
    .sb { width: 14px; background: #f0f0f0; display: flex; flex-direction: column; align-items: center; flex: none; color: #444; border-top: 6px solid #dedede; }
    .sb i { width: 12px; height: 257px; background: #cdcdcd; }
    .sb ui-icon:last-child { margin-top: auto; }
    .panel { width: 192px; padding: 12px 12px 0 13px; flex: none; }
    .panel ul { list-style: none; margin: 0; padding: 0; display: grid; grid-auto-rows: 1fr; }
    .a { height: 201px; } .b { height: 167px; }
    .panel a { display: flex; align-items: center; gap: 9px; height: 100%; }
    .panel a.sel { color: #2f72c0; }
    .panel hr { border: 0; border-top: 1px solid #d5d5d5; margin: 9px 0; }
    .rail { width: 39px; border-left: 1px solid #d0d0d0; flex: none; }
    .rail div { height: 422px; display: grid; grid-auto-rows: 1fr; }
    .rail .on { background: #c236cf; }
    output-preview { position: absolute; top: 127px; left: 0; right: 0; margin: 0 auto; width: 372px; }
    .arrow { position: absolute; top: 451px; left: calc(50% - 308px); pointer-events: none; }
    .foot { height: 1px; flex: none; background: linear-gradient(90deg, #c8c8c8 327px, #2d2833 327px); }
  `;
  render() {
    return html`
      <div class="titlebar">${icon("pdf", 13)}<span>Customer Info Form.pdf - Adobe Acrobat Pro DC</span>
        <div class="wc">${iconButton("minimize", "Minimize")}${iconButton("restore", "Restore")}${iconButton("closewin", "Close application")}</div></div>
      <nav class="menu" aria-label="Menu">${["File", "Edit", "View", "Sign", "Window", "Help"].map((m) => html`<button>${m}</button>`)}</nav>
      <div class="tabs">
        <button class="home">Home</button><button class="tools">Tools</button>
        <div class="tab"><span>Customer Info For...</span>${iconButton("closetab", "Close tab", 16)}</div>
        <div class="acct">${iconButton("chat", "Messages")}${iconButton("help", "Help")}${iconButton("bell", "Notifications")}${iconButton("avatar", "Account")}</div>
      </div>
      <div class="toolbar">
        <div class="tl">${iconButton("save", "Save")}${iconButton("star", "Star")}${iconButton("cloud", "Upload")}${iconButton("print", "Print")}${iconButton("find", "Find")}</div>
        <div class="tm">
          ${iconButton("up", "Previous page")}${iconButton("down", "Next page")}
          <span class="pageno"><input aria-label="Page number" value="1"><span class="total"><span>/</span><span>1</span></span></span>
          <span class="rule"></span>
          ${iconButton("pointer", "Select")}${iconButton("hand", "Pan")}${iconButton("minus", "Zoom out")}${iconButton("plus", "Zoom in")}
          <span class="zoom"><select aria-label="Zoom level"><option>125%</option></select>${icon("caret", 16)}</span>
          <button class="fit" aria-label="Fit width">${icon("fit")}${icon("caret", 16)}</button>
          ${iconButton("scroll", "Scrolling")}
          <span class="rule"></span>
          ${iconButton("comment", "Comment")}${iconButton("marker", "Highlight")}${iconButton("sign", "Sign")}${iconButton("pageedit", "Edit")}
        </div>
        <div class="tr">${iconButton("link", "Share link")}${iconButton("mail", "Send by email")}${iconButton("useradd", "Add people")}</div>
      </div>
      <div class="band"><h1>Print Production</h1><button class="close">Close</button></div>
      <div class="main">
        <div class="nav">${iconButton("pages", "Page thumbnails", 18)}${iconButton("bookmark", "Bookmarks", 20)}${iconButton("clip", "Attachments", 18)}${iconButton("layers", "Layers", 20)}</div>
        <div class="gutter">${iconButton("tleft", "Toggle left pane", 18)}</div>
        <div class="canvas"><form-page></form-page></div>
        <div class="sb">${icon("chevup", 15)}<i></i>${icon("chevdown", 15)}</div>
        <div class="gutter r">${iconButton("tright", "Toggle right pane", 18)}</div>
        <div class="panel">
          <ul class="a">${GROUP_A.map(([i, t], n) => html`<li><a href="#" class=${n === 0 ? "sel" : ""}>${icon(i, 19)}<span>${t}</span></a></li>`)}</ul>
          <hr>
          <ul class="b">${GROUP_B.map(([i, t]) => html`<li><a href="#">${icon(i, 19)}<span>${t}</span></a></li>`)}</ul>
        </div>
        <div class="rail"><div>${RAIL.map(([i, t]) => html`<button class="ib ${i === "rprint" ? "on" : ""}" aria-label=${t}>${icon(i, 19)}</button>`)}</div></div>
      </div>
      <div class="foot"></div>
      <output-preview></output-preview>
      <svg class="arrow" width="172" height="50" viewBox="0 0 172 50" aria-hidden="true"><path d="M0 20H128C125 13 121 6 118 0C135 14 154 22 172 24.500C154 27 135 36 118 50C121 43 125 36 128 28H0Z" fill="#f00"/></svg>
    `;
  }
}
